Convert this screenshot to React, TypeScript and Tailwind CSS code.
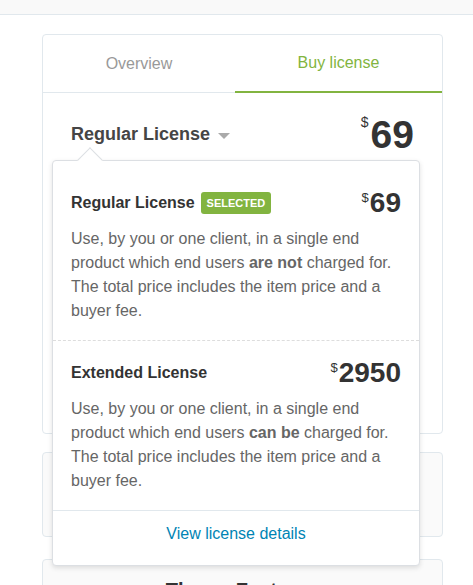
import React from 'react'

const font = { fontFamily: '"Liberation Sans", Arial, sans-serif' }

function Price({ amount, big }: { amount: string; big?: boolean }) {
  return (
    <div className="flex items-start font-bold text-[#333]">
      <span className={big ? 'text-[14px] leading-none font-normal mt-0 mr-[2px]' : 'text-[13px] leading-none font-normal mt-[2px] mr-[1px]'}>
        $
      </span>
      <span className={big ? 'text-[39px] leading-none' : 'text-[28px] leading-none'}>{amount}</span>
    </div>
  )
}

function LicenseOption({
  name,
  amount,
  selected,
  emphasis,
  first,
}: {
  name: string
  amount: string
  selected?: boolean
  emphasis: string
  first?: boolean
}) {
  return (
    <div className={first ? 'px-[18px] pt-[28px] pb-[17px]' : 'px-[18px] pt-[18px] pb-[17px]'}>
      <div className="flex items-center justify-between h-[28px]">
        <div className="flex items-center gap-[6px]">
          <span className="text-[16px] font-bold text-[#333]">{name}</span>
          {selected && (
            <span className="bg-[#82b440] text-white text-[11px] font-bold uppercase rounded-[3px] h-[22px] px-[6px] flex items-center">
              Selected
            </span>
          )}
        </div>
        <Price amount={amount} />
      </div>
      <p className="mt-[10px] text-[16px] leading-[24px] text-[#666]">
        Use, by you or one client, in a single end product which end users <b>{emphasis}</b> charged for. The total
        price includes the item price and a buyer fee.
      </p>
    </div>
  )
}

export default function App() {
  return (
    <div className="w-[473px] h-[585px] overflow-hidden bg-white" style={font}>
      <div className="h-[15px] bg-[#f9f9f9] border-b border-[#e1e8ed]" />

      <div className="ml-[42px] w-[401px] mt-[19px] flex flex-col">
        <div className="relative h-[400px] border border-[#e1e8ed] rounded-[4px] bg-white">
          <div className="flex h-[58px] border-b border-[#e1e8ed]">
            <div className="flex-auto flex items-center justify-center text-[16px] text-[#999]">Overview</div>
            <div className="flex-auto flex items-center justify-center text-[16px] text-[#82b440] border-b-2 border-[#82b440] -mb-px">
              Buy license
            </div>
          </div>

          <div className="flex items-center justify-between px-7 pt-[22px]">
            <div className="flex items-center gap-[8px] text-[18px] font-bold text-[#454545]">
              Regular License
              <span className="w-0 h-0 border-l-[6px] border-r-[6px] border-t-[6px] border-l-transparent border-r-transparent border-t-[#aaa] mt-[3px]" />
            </div>
            <Price amount="69" big />
          </div>

          <div className="absolute left-[9px] top-[125px] w-[368px] z-10 bg-white border border-[#dcdfe3] rounded-[4px] shadow-[0_2px_5px_rgba(0,0,0,0.12)]">
            <div className="absolute -top-[10px] left-[28px] w-[18px] h-[18px] rotate-45 bg-white border-l border-t border-[#dcdfe3]" />
            <div className="relative">
              <LicenseOption name="Regular License" amount="69" selected emphasis="are not" first />
              <div className="border-t border-dashed border-[#dddddd]" />
              <LicenseOption name="Extended License" amount="2950" emphasis="can be" />
              <div className="border-t border-[#e1e8ed]" />
              <div className="pt-[11px] pb-[19px] text-center text-[16px] leading-[24px] text-[#0084b4]">
                View license details
              </div>
            </div>
          </div>
        </div>

        <div className="mt-[18px] h-[85px] border border-[#e1e8ed] rounded-[4px] bg-[#fafafa]" />

        <div className="mt-[22px] h-[80px] border border-[#e1e8ed] rounded-[4px] bg-[#fafafa] pt-4 text-center text-[20px] leading-[28px] font-bold text-[#333]">
          Theme Features
        </div>
      </div>
    </div>
  )
}
